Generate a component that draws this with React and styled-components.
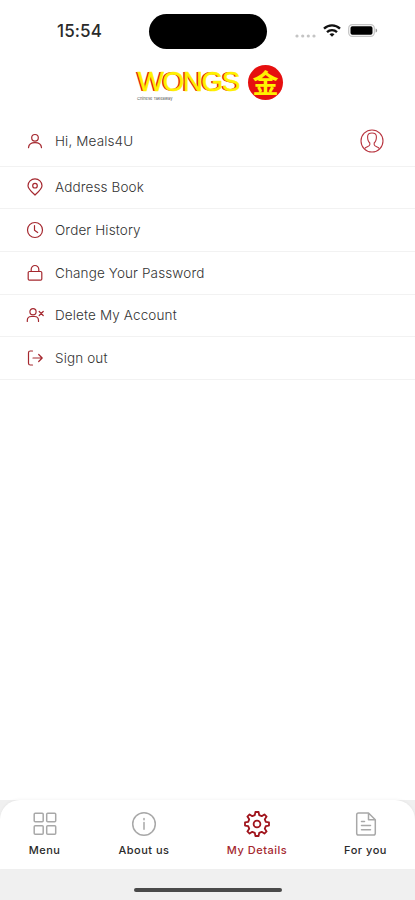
import React from "react";
import styled, { createGlobalStyle } from "styled-components";

const RED = "#a5282f";

const GlobalStyle = createGlobalStyle`
  * {
    box-sizing: border-box;
  }
  body {
    margin: 0;
    background: #fff;
    font-family: Inter, "Liberation Sans", sans-serif;
  }
`;

const UserIcon = () => (
  <Stroke viewBox="0 0 18 18">
    <circle cx="9" cy="5.8" r="3.3" />
    <path d="M2.500 15.600c.3-3.200 2.800-5 6.500-5s6.200 1.800 6.500 5" />
  </Stroke>
);

const PinIcon = () => (
  <Stroke viewBox="0 0 18 18">
    <path d="M9 17C5.600 13.800 2 10.800 2 7.700a7 6.800 0 0 1 14 0C16 10.800 12.400 13.800 9 17z" />
    <circle cx="9" cy="7.700" r="2.300" />
  </Stroke>
);

const ClockIcon = () => (
  <Stroke viewBox="0 0 18 18">
    <circle cx="9" cy="9" r="7.500" />
    <path d="M8.500 4.500v4.800l3.200 2.200" />
  </Stroke>
);

const LockIcon = () => (
  <Stroke viewBox="0 0 18 18">
    <rect x="2.200" y="7.500" width="13.600" height="8.700" rx="1.200" />
    <path d="M5.200 7.500V5.300a3.800 3.800 0 0 1 7.600 0v2.200" />
  </Stroke>
);

const UserRemoveIcon = () => (
  <Stroke viewBox="0 0 18 18">
    <circle cx="7" cy="5.700" r="3.100" />
    <path d="M1.300 15.500v-1c0-2.500 1.700-4 4-4h3.200c2.300 0 4 1.500 4 4v1M13.200 5.500l4 4M17.200 5.500l-4 4" />
  </Stroke>
);

const SignOutIcon = () => (
  <Stroke viewBox="0 0 18 18">
    <path d="M6.500 2H4.300Q2.500 2 2.500 3.800v10.400Q2.500 16 4.300 16h2.200M7 9h9M12.700 5.500 16.200 9l-3.500 3.500" />
  </Stroke>
);

const AvatarIcon = () => (
  <svg width="24" height="24" viewBox="0 0 24 24" fill="none" stroke="#b8343f" strokeWidth="1.1">
    <circle cx="12" cy="12" r="11" />
    <path d="M4.600 19.800c1-2.300 4.900-1.800 5.200-4V14C8.200 12.800 7.600 11 7.600 7.800c0-2.600 1.600-3.800 4.400-3.800s4.400 1.200 4.400 3.800c0 3.200-.6 5-2.200 6.200v1.800c.3 2.200 4.200 1.700 5.200 4" />
  </svg>
);

const GridIcon = () => (
  <TabSvg viewBox="0 0 26 26">
    <rect x="2.200" y="2.200" width="9" height="8.500" rx="1" />
    <rect x="14.700" y="2.200" width="9" height="8.500" rx="1" />
    <rect x="2.200" y="14.800" width="9" height="8.500" rx="1" />
    <rect x="14.700" y="14.800" width="9" height="8.500" rx="1" />
  </TabSvg>
);

const InfoIcon = () => (
  <TabSvg viewBox="0 0 26 26">
    <circle cx="13" cy="13" r="11.300" />
    <path d="M13 11.500v6.800M13 7.500v1.200" />
  </TabSvg>
);

const GearIcon = () => (
  <TabSvg viewBox="0 0 26 26" $active>
    <path d="M10.800 4.200 11.400 1h3.200l.6 3.200 2.500 1 2.700-1.800 2.200 2.200-1.800 2.700 1 2.500 3.200.6v3.200l-3.200.6-1 2.500 1.800 2.700-2.200 2.200-2.700-1.800-2.500 1-.6 3.200h-3.200l-.6-3.200-2.500-1-2.700 1.800-2.200-2.200 1.800-2.700-1-2.500L1 14.600v-3.200l3.200-.6 1-2.500-1.800-2.700 2.200-2.200 2.700 1.800z" />
    <circle cx="13" cy="13" r="3.400" />
  </TabSvg>
);

const DocIcon = () => (
  <TabSvg viewBox="0 0 26 26">
    <path d="M15.500 2H5.500Q3.700 2 3.700 3.800v18.400Q3.700 24 5.500 24h15q1.800 0 1.800-1.800V8.800zM15.500 2v6.800h6.800M8.500 10.500h3M8.500 14.500h9M8.500 18.700h9" />
  </TabSvg>
);

const rows = [
  { label: "Hi, Meals4U", icon: <UserIcon />, avatar: true },
  { label: "Address Book", icon: <PinIcon /> },
  { label: "Order History", icon: <ClockIcon /> },
  { label: "Change Your Password", icon: <LockIcon /> },
  { label: "Delete My Account", icon: <UserRemoveIcon /> },
  { label: "Sign out", icon: <SignOutIcon /> },
];

const tabs = [
  { label: "Menu", icon: <GridIcon />, width: 33 },
  { label: "About us", icon: <InfoIcon />, width: 52 },
  { label: "My Details", icon: <GearIcon />, width: 60, active: true },
  { label: "For you", icon: <DocIcon />, width: 43 },
];

const StatusBar = () => (
  <StatusWrapper>
    <Time>15:54</Time>
    <Island />
    <StatusIcons>
      <svg width="21" height="4" viewBox="0 0 21 4" fill="#c4c4c4">
        <circle cx="2" cy="2" r="1.600" />
        <circle cx="7.700" cy="2" r="1.600" />
        <circle cx="13.300" cy="2" r="1.600" />
        <circle cx="19" cy="2" r="1.600" />
      </svg>
      <svg width="18" height="13" viewBox="0 0 18 13" fill="none" stroke="#111" strokeWidth="2.300">
        <path d="M1 4.700a11.500 11.500 0 0 1 16 0M4 8.100a7.200 7.200 0 0 1 10 0" />
        <path d="M9 12.800 6.500 10.300a3.700 3.700 0 0 1 5 0z" fill="#111" stroke="none" />
      </svg>
      <svg width="30" height="13" viewBox="0 0 30 13">
        <rect x=".7" y=".6" width="25.600" height="11.800" rx="3.600" fill="#fff" stroke="#c4c4c4" strokeWidth="1.200" />
        <rect x="2.500" y="2.300" width="22" height="8.400" rx="1.800" fill="#000" />
        <path d="M27.600 4.500v4c1-.3 1.500-1 1.500-2s-.5-1.700-1.500-2z" fill="#999" />
      </svg>
    </StatusIcons>
  </StatusWrapper>
);

const App = () => {
  return (
    <Screen>
      <GlobalStyle />
      <StatusBar />
      <Header>
        <Brand>
          <BrandName>WONGS</BrandName>
          <BrandTagline>Chinese Takeaway</BrandTagline>
        </Brand>
        <Seal>金</Seal>
      </Header>
      <List>
        {rows.map((r) => (
          <Row key={r.label} $tall={r.avatar}>
            {r.icon}
            <RowLabel>{r.label}</RowLabel>
            {r.avatar && <AvatarIcon />}
          </Row>
        ))}
      </List>
      <Footer>
        <TabBar>
          {tabs.map((t) => (
            <Tab key={t.label} $width={t.width} $active={t.active}>
              {t.icon}
              <span>{t.label}</span>
            </Tab>
          ))}
        </TabBar>
        <HomeArea>
          <HomeIndicator />
        </HomeArea>
      </Footer>
    </Screen>
  );
};

const Screen = styled.div`
  width: 415px;
  height: 900px;
  display: flex;
  flex-direction: column;
  background: #fff;
  overflow: hidden;
`;

const StatusWrapper = styled.div`
  height: 62px;
  display: grid;
  grid-template-columns: 149px 118px 1fr;
  align-items: center;
  flex-shrink: 0;
`;

const Time = styled.div`
  padding-left: 57px;
  font-size: 17px;
  font-weight: 500;
  letter-spacing: 0.1px;
  color: #2a2a2a;
`;

const Island = styled.div`
  height: 35px;
  border-radius: 18px;
  background: #000;
`;

const StatusIcons = styled.div`
  display: flex;
  align-items: center;
  padding-left: 28px;
  gap: 7px;
  margin-top: -1px;
  & > svg:first-child {
    margin-top: 10px;
  }
`;

const Header = styled.div`
  height: 54px;
  display: flex;
  padding: 3px 0 0 136px;
  gap: 10px;
  flex-shrink: 0;
`;

const Brand = styled.div`
  width: 102px;
  padding-top: 4px;
`;

const BrandName = styled.div`
  font-family: "Liberation Sans", sans-serif;
  font-size: 28px;
  line-height: 26px;
  letter-spacing: -1.5px;
  padding-left: 1.5px;
  font-weight: 400;
  color: #fff200;
  -webkit-text-stroke: 0.6px #fff200;
  text-shadow: -1.8px -0.3px 0 #e3141b;
  white-space: nowrap;
`;

const BrandTagline = styled.div`
  font-size: 4px;
  line-height: 5px;
  padding: 1px 0 0 1px;
  color: #555;
`;

const Seal = styled.div`
  width: 35px;
  height: 35px;
  border-radius: 50%;
  background: #e60f0f;
  color: #fff200;
  font-family: "Noto Sans CJK SC", sans-serif;
  font-size: 26px;
  font-weight: 700;
  line-height: 33px;
  text-align: center;
`;

const List = styled.div`
  flex: 1;
`;

const Row = styled.div`
  height: ${(props) => (props.$tall ? "50.5px" : "42.7px")};
  padding: 0 31px 0 26px;
  display: flex;
  align-items: center;
  gap: 11px;
  border-bottom: 1px solid #f2f2f2;
`;

const RowLabel = styled.div`
  flex: 1;
  font-size: 13.5px;
  font-weight: 300;
  letter-spacing: 0.13px;
  color: #333;
`;

const Stroke = styled.svg`
  width: 18px;
  height: 18px;
  flex-shrink: 0;
  fill: none;
  stroke: ${RED};
  stroke-width: 1.2;
  stroke-linecap: round;
  stroke-linejoin: round;
`;

const Footer = styled.div`
  height: 100px;
  background: #f0f0f0;
  flex-shrink: 0;
`;

const TabBar = styled.div`
  height: 69px;
  padding: 11px 28px 0;
  display: flex;
  justify-content: space-between;
  background: #fff;
  border-radius: 20px 20px 0 0;
  box-shadow: 0 -1px 3px rgba(0, 0, 0, 0.04);
`;

const Tab = styled.div`
  width: ${(props) => props.$width}px;
  display: flex;
  flex-direction: column;
  align-items: center;
  gap: 6px;
  font-size: 11px;
  line-height: 15px;
  font-weight: 500;
  letter-spacing: 0.5px;
  color: ${(props) => (props.$active ? "#a5282f" : "#2a2a2a")};
  white-space: nowrap;
`;

const TabSvg = styled.svg`
  width: 26px;
  height: 26px;
  flex-shrink: 0;
  fill: none;
  stroke: ${(props) => (props.$active ? "#a0141c" : "#a8a8a8")};
  stroke-width: ${(props) => (props.$active ? 1.8 : 1.5)};
  stroke-linecap: round;
  stroke-linejoin: round;
`;

const HomeArea = styled.div`
  height: 31px;
  display: flex;
  justify-content: center;
  padding-top: 19px;
`;

const HomeIndicator = styled.div`
  width: 148px;
  height: 4px;
  border-radius: 2px;
  background: #4a4a4a;
`;

export default App;
